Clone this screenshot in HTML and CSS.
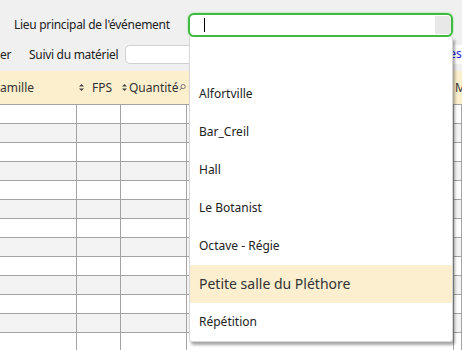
FILE: index.html
```html
<!DOCTYPE html>
<html lang="fr">
<head>
  <meta charset="UTF-8">
  <meta name="viewport" content="width=device-width, initial-scale=1.0">
  <title>Lieu principal</title>
  <link rel="stylesheet" href="styles.css">
</head>
<body>

  <!-- Event place picker -->
  <div class="bar bar-place">
    <span class="label">Lieu principal de l'événement</span>
    <div class="combo">
      <div class="combo-field"><span class="caret"></span></div>
      <div class="combo-btn"></div>

      <!-- Open list -->
      <ul class="menu">
        <li class="menu-item"></li>
        <li class="menu-item">Alfortville</li>
        <li class="menu-item">Bar_Creil</li>
        <li class="menu-item">Hall</li>
        <li class="menu-item">Le Botanist</li>
        <li class="menu-item">Octave - Régie</li>
        <li class="menu-item active">Petite salle du Pléthore</li>
        <li class="menu-item">Répétition</li>
      </ul>
    </div>
  </div>

  <!-- Filters -->
  <div class="bar bar-filter">
    <span class="label cut">er</span>
    <span class="label">Suivi du matériel</span>
    <div class="search-box"></div>
    <span class="link">es</span>
  </div>

  <!-- Equipment grid -->
  <div class="grid">
    <div class="grid-head">
      <div class="head-cell">amille</div>
      <div class="head-cell head-fps">
        <svg class="sort" width="5" height="7" viewBox="0 0 5 7"><path d="M2.5 0L5 2.6H0Z M2.5 7L5 4.4H0Z" fill="#444"/></svg>
        <span>FPS</span>
        <svg class="sort" width="5" height="7" viewBox="0 0 5 7"><path d="M2.5 0L5 2.6H0Z M2.5 7L5 4.4H0Z" fill="#444"/></svg>
      </div>
      <div class="head-cell head-qty">
        <span>Quantité</span>
        <svg class="find" width="8" height="9" viewBox="0 0 8 9"><circle cx="5" cy="3.3" r="2.6" fill="none" stroke="#555" stroke-width="0.9"/><path d="M3.2 5.2L0.8 7.8" stroke="#555" stroke-width="1"/></svg>
      </div>
      <div class="head-cell"></div>
      <div class="head-cell head-last">M</div>
    </div>
    <div class="grid-body" id="rows"></div>
  </div>

  <script>
    // Build the empty table rows
    var rows = document.getElementById("rows");
    for (var i = 0; i < 13; i++) {
      var row = document.createElement("div");
      row.className = i % 2 ? "row row-alt" : "row";
      for (var c = 0; c < 5; c++) {
        var cell = document.createElement("div");
        cell.className = "cell";
        row.appendChild(cell);
      }
      rows.appendChild(row);
    }
  </script>

</body>
</html>
```

FILE: styles.css
```css
/* Reset */
* {
  margin: 0;
  padding: 0;
  box-sizing: border-box;
}

body {
  width: 462px;
  height: 350px;
  overflow: hidden;
  font-family: "Noto Sans", "Open Sans", sans-serif;
  font-size: 12px;
  color: #222;
  background-color: #f0f0f0;
}

/* Toolbars */
.bar {
  display: flex;
  align-items: center;
}

.bar-place {
  padding: 13px 9px 0 14px;
  height: 37px;
  align-items: flex-start;
}

.bar-place .label {
  line-height: 24px;
}

.bar-filter {
  margin-top: 8px;
  height: 19px;
}

.label {
  white-space: nowrap;
  color: #222;
  letter-spacing: -0.3px;
  flex-shrink: 0;
}

.cut {
  width: 29px;
}

.search-box {
  margin-left: 7px;
  width: 320px;
  height: 19px;
  background: #fff;
  border: 1px solid #d0d0d0;
  border-radius: 5px;
  flex-shrink: 0;
}

.link {
  margin-left: 2px;
  padding-left: 2px;
  color: #1a1ad0;
  background: #fff;
  height: 19px;
  line-height: 18px;
  flex: 1;
  white-space: nowrap;
  overflow: hidden;
}

/* Combo box */
.combo {
  position: relative;
  margin-left: auto;
  width: 265px;
  height: 24px;
  display: flex;
  border: 2px solid #3fba3f;
  border-radius: 6px;
  box-shadow: 0 0 2px rgba(60, 190, 60, 0.6);
  background: #fff;
  flex-shrink: 0;
}

.combo-field {
  flex: 1;
  padding-left: 14px;
  display: flex;
  align-items: center;
}

.caret {
  width: 1px;
  height: 14px;
  background: #000;
}

.combo-btn {
  width: 16px;
  margin: 1px 0;
  background: #e8e8e8;
  border-radius: 0 4px 4px 0;
}

.menu {
  position: absolute;
  top: 22px;
  left: -1px;
  width: 264px;
  list-style: none;
  background: #fff;
  border: 1px solid #d8d8d8;
  border-top: none;
  border-radius: 0 0 3px 3px;
  box-shadow: 2px 3px 3px rgba(0, 0, 0, 0.35);
  z-index: 2;
}

.menu-item {
  height: 38px;
  line-height: 38px;
  padding-left: 9px;
  color: #222;
  white-space: nowrap;
}

.menu-item.active {
  background: #fcefcf;
  font-size: 14px;
  color: #333;
}

/* Grid */
.grid {
  margin-top: 7px;
}

.grid-head {
  display: grid;
  grid-template-columns: 79px 49px 58px 267px 1fr;
  height: 34px;
  background: #fcefcd;
  border-bottom: 1px solid #a3a3a3;
}

.head-cell {
  display: flex;
  align-items: center;
  color: #333;
  white-space: nowrap;
  overflow: hidden;
}

.head-fps span {
  margin: 0 10px 0 8px;
}

.head-qty span {
  margin-left: 1px;
}

.find {
  margin-left: 1px;
}

.head-last {
  padding-left: 2px;
}

.row {
  display: grid;
  grid-template-columns: 77px 44px 66px 267px 1fr;
  height: 19px;
  background: #fff;
  border-bottom: 1px solid #a3a3a3;
}

.row-alt {
  background: #f3f3f3;
}

.cell {
  border-right: 1px solid #a3a3a3;
}
```
